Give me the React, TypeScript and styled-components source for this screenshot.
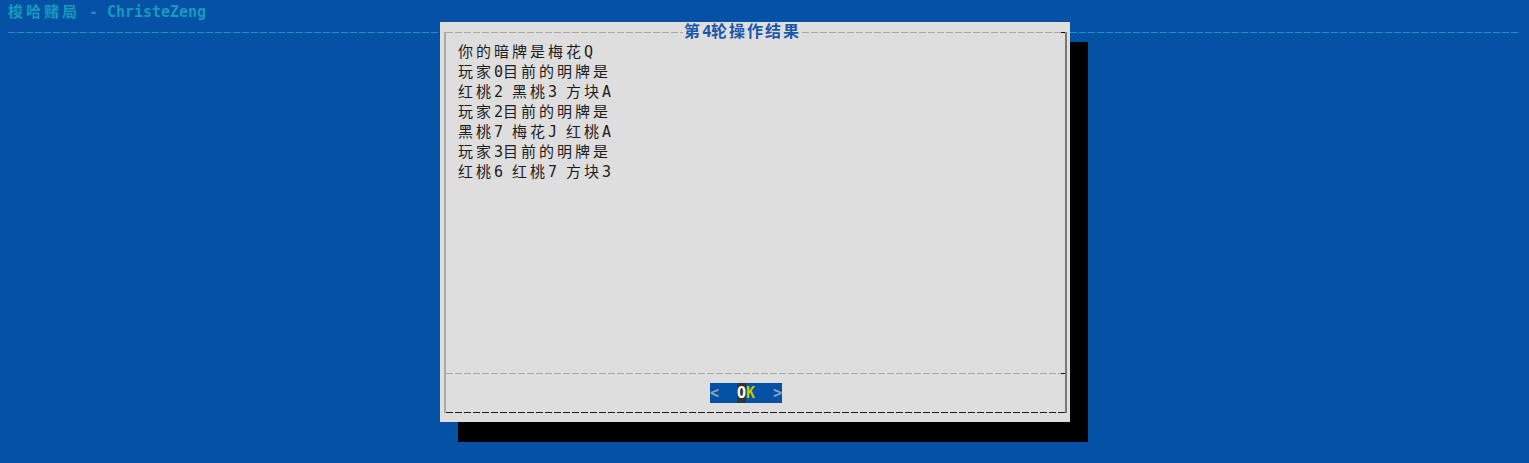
import React from 'react';
import styled, { createGlobalStyle } from 'styled-components';

const GlobalStyle = createGlobalStyle`
  html, body {
    margin: 0;
    padding: 0;
    background: #0451a5;
  }
`

const Screen = styled.div`
  position: relative;
  width: 1529px;
  height: 463px;
  overflow: hidden;
  box-sizing: border-box;
  padding: 2px 9px 0 8px;
  background: #0451a5;
  font-family: "DejaVu Sans Mono", "Noto Sans CJK SC", monospace;
  font-size: 15px;
`

const Row = styled.div<{ $color?: string; $bold?: boolean }>`
  display: flex;
  height: 20px;
  line-height: 20px;
  white-space: pre;
  color: ${p => p.$color || '#1c1c1c'};
  font-weight: ${p => (p.$bold ? 700 : 400)};
`

const Cell = styled.span<{ $wide?: boolean; $color?: string; $bg?: string }>`
  display: inline-block;
  width: ${p => (p.$wide ? 18 : 9)}px;
  text-align: ${p => (p.$wide ? 'left' : 'center')};
  color: ${p => p.$color || 'inherit'};
  background: ${p => p.$bg || 'transparent'};
`

const Rule = styled.div<{ $color: string }>`
  height: 1px;
  background-image: repeating-linear-gradient(
    to right,
    ${p => p.$color} 0 7px,
    transparent 7px 9px
  );
`

const HeaderRule = styled.div`
  height: 20px;
  display: flex;
  flex-direction: column;
  justify-content: center;
`

const Dialog = styled.div`
  position: absolute;
  top: 22px;
  left: 440px;
  width: 630px;
  height: 400px;
  box-sizing: border-box;
  padding: 10px 3px 9px 4px;
  background: #dedede;
  box-shadow: 18px 20px 0 #000;
`

const Frame = styled.div`
  height: 381px;
  display: flex;
  flex-direction: column;
  border-left: 2px solid #ababab;
  border-right: 2px solid #777;
`

const TopRule = styled.div`
  display: flex;
  align-items: center;
  height: 1px;
`

const Segment = styled(Rule)<{ $width?: number }>`
  width: ${p => (p.$width ? `${p.$width}px` : 'auto')};
  flex: ${p => (p.$width ? 'none' : 1)};
`

const Corner = styled.div`
  width: 4px;
  height: 1px;
  background: #111;
`

const Title = styled.div`
  display: flex;
  height: 20px;
  line-height: 20px;
  margin: -10px 0 -9px;
  padding: 0 1px;
  background: #dedede;
  color: #1a56ad;
  font-weight: 700;
  font-size: 16px;
  white-space: pre;
`

const Body = styled.div`
  flex: 1;
  padding: 9px 0 0 12px;
`

const Separator = styled.div`
  display: flex;
  align-items: center;
  height: 1px;
`

const ButtonRow = styled.div`
  display: flex;
  height: 20px;
  margin-top: 9px;
  padding-left: 264px;
`

const Button = styled(Row)`
  background: #0451a5;
  color: #8f9fb4;
  font-weight: 700;
`

const BottomRule = styled(Rule)`
  margin-top: 9px;
`

const isWide = (ch: string) => /[\u2e80-\u9fff\uff00-\uffef]/.test(ch);

const Term: React.FC<{ text: string }> = ({ text }) => (
  <>
    {Array.from(text).map((ch, i) => (
      <Cell key={i} $wide={isWide(ch)}>{ch}</Cell>
    ))}
  </>
);

const lines = [
  '你的暗牌是梅花Q',
  '玩家0目前的明牌是',
  '红桃2 黑桃3 方块A',
  '玩家2目前的明牌是',
  '黑桃7 梅花J 红桃A',
  '玩家3目前的明牌是',
  '红桃6 红桃7 方块3',
];

const App: React.FC = () => {
  return (
    <>
      <GlobalStyle />
      <Screen>
        <Row $color="#159cbc" $bold>
          <Term text="梭哈赌局 - ChristeZeng" />
        </Row>
        <HeaderRule>
          <Rule $color="#1496b8" />
        </HeaderRule>

        <Dialog>
          <Frame>
            <TopRule>
              <Segment $color="#a8a8a8" $width={237} />
              <Title>
                <Term text="第4轮操作结果" />
              </Title>
              <Segment $color="#a8a8a8" />
              <Corner />
            </TopRule>
            <Body>
              {lines.map((line, i) => (
                <Row key={i}>
                  <Term text={line} />
                </Row>
              ))}
            </Body>
            <Separator>
              <Segment $color="#a8a8a8" />
              <Corner />
            </Separator>
            <ButtonRow>
              <Button>
                <Cell>{'<'}</Cell>
                <Cell> </Cell>
                <Cell> </Cell>
                <Cell $color="#ffffff" $bg="#333333">O</Cell>
                <Cell $color="#c8c800">K</Cell>
                <Cell> </Cell>
                <Cell> </Cell>
                <Cell>{'>'}</Cell>
              </Button>
            </ButtonRow>
            <BottomRule $color="#1a1a1a" />
          </Frame>
        </Dialog>
      </Screen>
    </>
  );
}

export default App;
